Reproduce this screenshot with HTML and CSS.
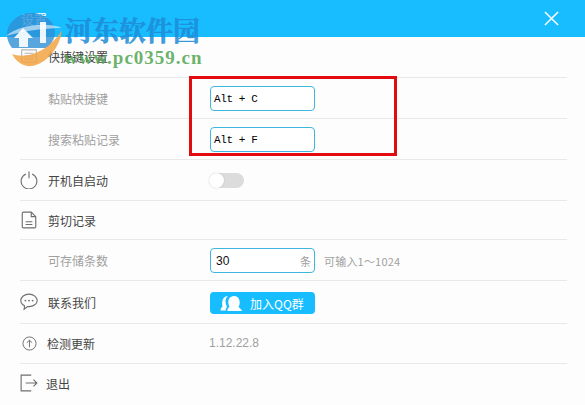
FILE: index.html
```html
<!DOCTYPE html>
<html lang="zh-CN">
<head>
  <meta charset="UTF-8" />
  <title>设置</title>
  <link rel="stylesheet" href="styles.css">
</head>
<body>

<div class="window">
  <div class="title-bar">
    <span class="title">设置</span>
    <svg class="close" viewBox="0 0 16 16"><path d="M1 1L15 15M15 1L1 15" /></svg>
  </div>

  <div class="settings">
    <div class="row row-first">
      <svg class="icon icon-keys" viewBox="0 0 16 16"><path d="M1.500 2.500h13v11h-13zM4 5.500h8M4 8h8M4 10.500h8" /></svg>
      <span class="label">快捷键设置</span>
    </div>
    <div class="row">
      <span class="label sub">黏贴快捷键</span>
      <div class="field key">Alt + C</div>
    </div>
    <div class="row">
      <span class="label sub">搜索粘贴记录</span>
      <div class="field key">Alt + F</div>
    </div>
    <div class="row">
      <svg class="icon" viewBox="0 0 16 16"><path d="M5.200 2.600a7 7 0 1 0 5.600 0M8 .5v6" /></svg>
      <span class="label">开机自启动</span>
      <div class="switch"><span class="knob"></span></div>
    </div>
    <div class="row row-short">
      <svg class="icon" viewBox="0 0 16 16"><path d="M2 2a1 1 0 0 1 1-1h7l4 4v9a1 1 0 0 1-1 1H3a1 1 0 0 1-1-1zM10 1v4h4M5 9.500h6M5 12h6" /></svg>
      <span class="label">剪切记录</span>
    </div>
    <div class="row">
      <span class="label sub">可存储条数</span>
      <div class="field count"><span class="count-value">30</span><span class="unit">条</span></div>
      <span class="hint">可输入1～1024</span>
    </div>
    <div class="row row-tall">
      <svg class="icon" viewBox="0 0 16 16"><path d="M8 1C4 1 .7 3.500 .7 6.700c0 2 1.300 3.700 3.300 4.700l-.3 3 3-2.300H8c4 0 7.300-2.500 7.300-5.400S12 1 8 1z" /><circle class="dot" cx="4.800" cy="6.700" r=".8" /><circle class="dot" cx="8" cy="6.700" r=".8" /><circle class="dot" cx="11.200" cy="6.700" r=".8" /></svg>
      <span class="label">联系我们</span>
      <div class="qq-btn">
        <svg class="qq-icon" viewBox="0 0 22 17"><path d="M6 15.500H.5c0-2 1-3 2-4C2 9 2 6 3 4c1-2 3-3 5-3C6.500 2 5.500 4 5.500 6c0 2 .5 4 1.500 6-1 1-1.500 2-1 3.500z" /><path d="M7.500 16c-.5-2 .5-3 2-4-1-2.500-1.500-4.500-1-7C9.500 2 12 1 14 1c3 0 5 2 5.500 4.500.5 2.500 0 5-1 6.500 1 1 3 2 3.500 4z" /></svg>
        <span>加入QQ群</span>
      </div>
    </div>
    <div class="row row-update">
      <svg class="icon icon-small" viewBox="0 0 16 16"><circle cx="8" cy="8" r="7" /><path d="M8 12V4.500M5.200 7.200L8 4.500l2.800 2.700" /></svg>
      <span class="label">检测更新</span>
      <span class="version">1.12.22.8</span>
    </div>
    <div class="row row-last">
      <svg class="icon" viewBox="0 0 16 16"><path d="M10 1H1v14h9M5 8h10M12 5l3 3-3 3" /></svg>
      <span class="label label-exit">退出</span>
    </div>
  </div>

  <!-- site watermark and annotation pasted over the screenshot -->
  <div class="highlight"></div>
  <svg class="wm-logo" viewBox="0 0 70 70">
    <path class="wm-blue" d="M31 13C18 13 7 23 7 34c0 6 2 10 5 14h34c6-4 9-10 9-16 0-11-11-19-24-19z" />
    <path class="wm-white" d="M23 28L14 38h5v9h9v-9h5zM40 22h6v21h-6z" />
    <path class="wm-swoosh" d="M6 36C20 24 48 22 62 28 50 28 26 30 6 36z" />
    <path class="wm-orange" d="M62 30C60 48 46 64 32 66 24 67 16 62 12 54 28 60 50 50 62 30z" />
  </svg>
  <div class="wm-name">河东软件园</div>
  <div class="wm-url">www.pc0359.cn</div>
</div>

</body>
</html>
```

FILE: styles.css
```css
* {
  margin: 0;
  padding: 0;
  box-sizing: border-box;
}

body {
  background: #fdfdfd;
  font-family: "Noto Sans CJK SC", "Liberation Sans", sans-serif;
}

.window {
  position: relative;
  width: 585px;
  height: 405px;
  overflow: hidden;
}

.title-bar {
  height: 37px;
  background: #18bdff;
  display: flex;
  align-items: center;
  justify-content: space-between;
  padding: 0 26px 0 21px;
  color: #fff;
}

.title {
  font-size: 13px;
}

.close {
  width: 15px;
  height: 15px;
  fill: none;
  stroke: #fff;
  stroke-width: 1.6;
}

.settings {
  padding: 0 18px 0 20px;
}

.row {
  height: 41px;
  display: flex;
  align-items: center;
  border-bottom: 1px solid #e9e9e9;
}

.row-first {
  padding-bottom: 2px;
}

.row-short {
  height: 39px;
}

.row-tall {
  height: 43px;
}

.row-update {
  height: 40px;
  padding-bottom: 1px;
}

.row-last {
  height: 42px;
  border-bottom: none;
  padding-bottom: 5px;
}

.icon {
  width: 18px;
  height: 18px;
  margin-right: 10px;
  flex-shrink: 0;
  fill: none;
  stroke: #6e6e6e;
  stroke-width: 1;
}

.icon-keys {
  stroke: #b5b5b5;
}

.icon-small {
  width: 15px;
  height: 15px;
  margin: 0 10px 0 2px;
}

.dot {
  fill: #6e6e6e;
  stroke: none;
}

.label {
  width: 162px;
  padding-top: 1px;
  font-size: 12px;
  color: #444;
  flex-shrink: 0;
}

.label.sub {
  margin-left: 28px;
  color: #a0a0a0;
}

.label-exit {
  margin-left: -2px;
}

.field {
  width: 105px;
  height: 25px;
  background: #fff;
  border: 1px solid #3fb6dc;
  border-radius: 4px;
  display: flex;
  align-items: center;
  padding: 0 2px;
  color: #111;
}

.key {
  font-family: "Liberation Mono", monospace;
  font-size: 11px;
  letter-spacing: -.4px;
  padding-top: 1px;
  padding-left: 3px;
  color: #000;
}

.count {
  justify-content: space-between;
  font-size: 12px;
  font-family: "Liberation Sans", sans-serif;
  padding: 1px 3px 0 5px;
}

.unit {
  font-family: "Noto Sans CJK SC", sans-serif;
  font-size: 11px;
  color: #a0a0a0;
}

.hint {
  margin: 2px 0 0 9px;
  font-size: 11px;
  letter-spacing: .2px;
  color: #a0a0a0;
}

.switch {
  width: 35px;
  height: 15px;
  margin-left: -1px;
  border-radius: 8px;
  background: #dcdcdc;
}

.knob {
  display: block;
  width: 15px;
  height: 15px;
  border-radius: 50%;
  background: #fff;
  box-shadow: 0 0 2px rgba(0,0,0,0.15);
}

.qq-btn {
  width: 105px;
  height: 22px;
  margin-top: 2px;
  background: #18bdff;
  border-radius: 4px;
  display: flex;
  align-items: center;
  padding-left: 10px;
  gap: 8px;
  color: #fff;
  font-size: 12px;
}

.qq-icon {
  width: 22px;
  height: 17px;
  fill: #fff;
}

.version {
  font-size: 12px;
  font-family: "Liberation Sans", sans-serif;
  color: #a0a0a0;
}

.highlight {
  position: absolute;
  left: 189px;
  top: 76px;
  width: 208px;
  height: 80px;
  border: 3px solid #e20c10;
}

.wm-logo {
  position: absolute;
  left: 0;
  top: 0;
  width: 70px;
  height: 70px;
}

.wm-blue {
  fill: #2f8fd4;
  opacity: .8;
}

.wm-white {
  fill: #fff;
  opacity: .9;
}

.wm-swoosh {
  fill: #fff;
  opacity: .55;
}

.wm-orange {
  fill: #f2a544;
  opacity: .85;
}

.wm-name {
  position: absolute;
  left: 65px;
  top: 10px;
  font-family: "Noto Serif CJK SC", "Noto Sans CJK SC", sans-serif;
  font-size: 27px;
  font-weight: 700;
  -webkit-text-stroke: .5px rgba(30,140,215,.85);
  color: rgba(30,140,215,.85);
}

.wm-url {
  position: absolute;
  left: 64px;
  top: 47px;
  font-family: "Liberation Serif", serif;
  font-size: 19px;
  font-weight: 700;
  letter-spacing: 1px;
  color: rgba(80,165,80,.85);
}
```
